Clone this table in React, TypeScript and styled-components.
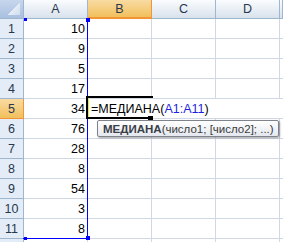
import React from 'react';
import styled, { createGlobalStyle, css } from 'styled-components';

const GlobalStyle = createGlobalStyle`
  html, body {
    margin: 0;
    padding: 0;
    background: #ffffff;
    overflow: hidden;
  }
  * {
    box-sizing: border-box;
  }
`;

const Sheet = styled.div`
  position: relative;
  display: grid;
  grid-template-columns: 24px repeat(4, 64px) 3px;
  grid-template-rows: 19px repeat(12, 20px);
  width: 283px;
  height: 242px;
  overflow: hidden;
  font-family: 'Liberation Sans', Arial, sans-serif;
  font-size: 12.5px;
  color: #000;
`;

const Corner = styled.div`
  position: relative;
  background: linear-gradient(#c7d6ec, #a9c0e0);
  border-right: 1px solid #9eb6ce;
  border-bottom: 1px solid #9eb6ce;
`;

const CornerMark = styled.div`
  position: absolute;
  right: 3px;
  bottom: 3px;
  width: 13px;
  height: 12px;
  background: linear-gradient(135deg, transparent 50%, #e6edf6 50%, #cfdcee 100%);
`;

const ColHead = styled.div<{ $active?: boolean }>`
  display: flex;
  align-items: center;
  justify-content: center;
  color: #27384e;
  background: ${p =>
    p.$active ? 'linear-gradient(#f9dba3, #f1c05c)' : 'linear-gradient(#fafcfe, #d9e1ec)'};
  border-right: 1px solid ${p => (p.$active ? '#f29536' : '#9eb6ce')};
  border-bottom: ${p => (p.$active ? '2px solid #f29536' : '1px solid #9eb6ce')};
`;

const RowHead = styled.div<{ $active?: boolean }>`
  display: flex;
  align-items: center;
  justify-content: center;
  color: #27384e;
  background: ${p => (p.$active ? 'linear-gradient(#f9dba3, #f1c05c)' : '#e4ecf7')};
  border-right: 1px solid ${p => (p.$active ? '#f29536' : '#9eb6ce')};
  border-bottom: 1px solid ${p => (p.$active ? '#f29536' : '#9eb6ce')};
`;

const Cell = styled.div<{ $num?: boolean }>`
  display: flex;
  align-items: center;
  justify-content: ${p => (p.$num ? 'flex-end' : 'flex-start')};
  padding: 0 2px;
  border-right: 1px solid #d0d7e5;
  border-bottom: 1px solid #d0d7e5;
`;

const EditCell = styled.div`
  grid-column: span 4;
  display: flex;
  align-items: center;
  padding-left: 3px;
  white-space: nowrap;
  border-bottom: 1px solid #d0d7e5;
`;

const Ref = styled.span`
  color: #1f1fe0;
`;

// blue frame of the referenced range A1:A11
const RangeFrame = styled.div`
  position: absolute;
  left: 23px;
  top: 18px;
  width: 65px;
  height: 221px;
  border-right: 1px solid #0000ff;
  border-bottom: 1px solid #0000ff;
  pointer-events: none;
`;

type Corner = 'tl' | 'tr' | 'bl' | 'br';

const Handle = styled.div<{ $at: Corner }>`
  position: absolute;
  background: #0000ff;
  width: ${p => (p.$at[1] === 'l' ? 3 : 4)}px;
  height: ${p => (p.$at[1] === 'l' ? 3 : 4)}px;
  ${p => (p.$at[0] === 't' ? css`top: 0;` : css`bottom: -2px;`)}
  ${p => (p.$at[1] === 'l' ? css`left: 1px;` : css`right: -3px;`)}
`;

const EditFrame = styled.div`
  position: absolute;
  left: 86px;
  top: 96px;
  width: 67px;
  height: 23px;
  border-top: 2px solid #000;
  border-bottom: 2px solid #000;
  border-left: 2px solid #000;
  pointer-events: none;
`;

const EditCaret = styled.div`
  position: absolute;
  left: 0;
  top: 0;
  width: 1px;
  height: 100%;
  background: #e9e34a;
`;

const FillHandle = styled.div`
  position: absolute;
  right: 0;
  bottom: -3px;
  width: 5px;
  height: 4px;
  background: #000;
`;

const Tooltip = styled.div`
  position: absolute;
  left: 97px;
  top: 120px;
  width: 182px;
  height: 17px;
  display: flex;
  align-items: center;
  padding-left: 5px;
  white-space: nowrap;
  font-family: 'Liberation Sans', Arial, sans-serif;
  font-size: 11.5px;
  color: #3c3c3c;
  background: linear-gradient(#ffffff, #e4e8ef);
  border: 1px solid #7f848c;
  border-radius: 2px;
  box-shadow: 1px 1px 2px rgba(0, 0, 0, 0.35);
`;

const FuncName = styled.b`
  font-weight: bold;
  color: #3a3f47;
`;

const columns = ['A', 'B', 'C', 'D', ''];
const values = [10, 9, 5, 17, 34, 76, 28, 8, 54, 3, 8];

const App = () => {
  const rows = Array.from({ length: 12 }, (_, i) => i + 1);

  return (
    <>
      <GlobalStyle />
      <Sheet>
        <Corner>
          <CornerMark />
        </Corner>
        {columns.map((c, i) => (
          <ColHead key={i} $active={c === 'B'}>
            {c}
          </ColHead>
        ))}
        {rows.map(r => (
          <React.Fragment key={r}>
            {/* row 12 is only a sliver at the bottom edge, its label is out of view */}
            <RowHead $active={r === 5}>{r <= 11 ? r : ''}</RowHead>
            <Cell $num>{values[r - 1]}</Cell>
            {r === 5 ? (
              <EditCell>
                =МЕДИАНА(<Ref>A1:A11</Ref>)
              </EditCell>
            ) : (
              columns.slice(1).map((_, i) => <Cell key={i} />)
            )}
          </React.Fragment>
        ))}

        <RangeFrame>
          <Handle $at="tl" />
          <Handle $at="tr" />
          <Handle $at="bl" />
          <Handle $at="br" />
        </RangeFrame>

        <EditFrame>
          <EditCaret />
          <FillHandle />
        </EditFrame>

        <Tooltip>
          <FuncName>МЕДИАНА</FuncName>(число1; [число2]; ...)
        </Tooltip>
      </Sheet>
    </>
  );
};

export default App;
